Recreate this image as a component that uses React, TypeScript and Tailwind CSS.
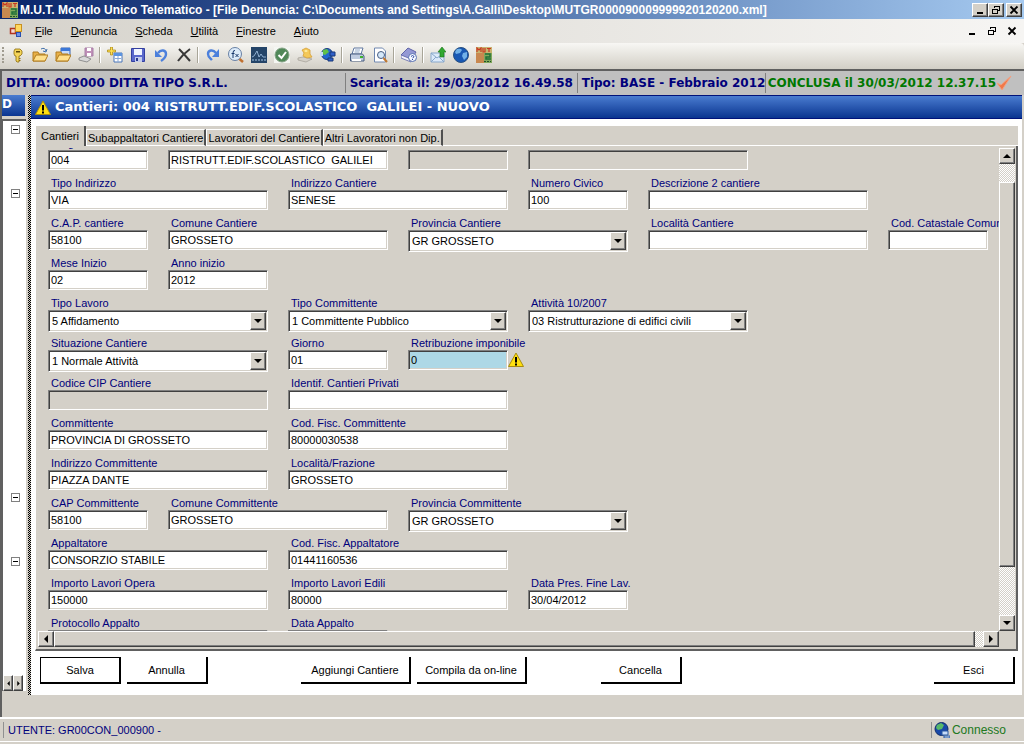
import { type ReactNode, useState } from 'react'
import { clsx } from 'clsx'

interface FieldProps {
  id: string
  label?: string
  value?: string
  col: string
  kind?: 'text' | 'select' | 'disabled' | 'warning'
}

const fields: FieldProps[] = [
  { id: 'progr', label: 'Progr.', value: '004', col: 'col-start-1' },
  { id: 'nome', value: 'RISTRUTT.EDIF.SCOLASTICO  GALILEI', col: 'col-start-2 col-span-2' },
  { id: 'extra1', col: 'col-start-4', kind: 'disabled' },
  { id: 'extra2', col: 'col-start-5 col-span-2', kind: 'disabled' },

  { id: 'tipo-indirizzo', label: 'Tipo Indirizzo', value: 'VIA', col: 'col-start-1 col-span-2' },
  { id: 'indirizzo', label: 'Indirizzo Cantiere', value: 'SENESE', col: 'col-start-3 col-span-2' },
  { id: 'civico', label: 'Numero Civico', value: '100', col: 'col-start-5' },
  { id: 'descrizione2', label: 'Descrizione 2 cantiere', col: 'col-start-6 col-span-2' },

  { id: 'cap', label: 'C.A.P. cantiere', value: '58100', col: 'col-start-1' },
  { id: 'comune', label: 'Comune Cantiere', value: 'GROSSETO', col: 'col-start-2 col-span-2' },
  { id: 'provincia', label: 'Provincia Cantiere', value: 'GR GROSSETO', col: 'col-start-4 col-span-2', kind: 'select' },
  { id: 'localita', label: 'Località Cantiere', col: 'col-start-6 col-span-2' },
  { id: 'catastale', label: 'Cod. Catastale Comune', col: 'col-start-8' },

  { id: 'mese', label: 'Mese Inizio', value: '02', col: 'col-start-1' },
  { id: 'anno', label: 'Anno inizio', value: '2012', col: 'col-start-2' },

  { id: 'tipo-lavoro', label: 'Tipo Lavoro', value: '5 Affidamento', col: 'col-start-1 col-span-2', kind: 'select' },
  { id: 'tipo-committente', label: 'Tipo Committente', value: '1 Committente Pubblico', col: 'col-start-3 col-span-2', kind: 'select' },
  { id: 'attivita', label: 'Attività 10/2007', value: '03 Ristrutturazione di edifici civili', col: 'col-start-5 col-span-2', kind: 'select' },

  { id: 'situazione', label: 'Situazione Cantiere', value: '1 Normale Attività', col: 'col-start-1 col-span-2', kind: 'select' },
  { id: 'giorno', label: 'Giorno', value: '01', col: 'col-start-3' },
  { id: 'retribuzione', label: 'Retribuzione imponibile', value: '0', col: 'col-start-4 col-span-2', kind: 'warning' },

  { id: 'cip', label: 'Codice CIP Cantiere', col: 'col-start-1 col-span-2', kind: 'disabled' },
  { id: 'privati', label: 'Identif. Cantieri Privati', col: 'col-start-3 col-span-2' },

  { id: 'committente', label: 'Committente', value: 'PROVINCIA DI GROSSETO', col: 'col-start-1 col-span-2' },
  { id: 'cf-committente', label: 'Cod. Fisc. Committente', value: '80000030538', col: 'col-start-3 col-span-2' },

  { id: 'ind-committente', label: 'Indirizzo Committente', value: 'PIAZZA DANTE', col: 'col-start-1 col-span-2' },
  { id: 'frazione', label: 'Località/Frazione', value: 'GROSSETO', col: 'col-start-3 col-span-2' },

  { id: 'cap-committente', label: 'CAP Committente', value: '58100', col: 'col-start-1' },
  { id: 'comune-committente', label: 'Comune Committente', value: 'GROSSETO', col: 'col-start-2 col-span-2' },
  { id: 'prov-committente', label: 'Provincia Committente', value: 'GR GROSSETO', col: 'col-start-4 col-span-2', kind: 'select' },

  { id: 'appaltatore', label: 'Appaltatore', value: 'CONSORZIO STABILE', col: 'col-start-1 col-span-2' },
  { id: 'cf-appaltatore', label: 'Cod. Fisc. Appaltatore', value: '01441160536', col: 'col-start-3 col-span-2' },

  { id: 'importo-opera', label: 'Importo Lavori Opera', value: '150000', col: 'col-start-1 col-span-2' },
  { id: 'importo-edili', label: 'Importo Lavori Edili', value: '80000', col: 'col-start-3 col-span-2' },
  { id: 'fine-lavori', label: 'Data Pres. Fine Lav.', value: '30/04/2012', col: 'col-start-5' },

  { id: 'protocollo', label: 'Protocollo Appalto', col: 'col-start-1 col-span-2' },
  { id: 'data-appalto', label: 'Data Appalto', col: 'col-start-3' },
]

const menus = ['File', 'Denuncia', 'Scheda', 'Utilità', 'Finestre', 'Aiuto']
const tabs = ['Cantieri', 'Subappaltatori Cantiere', 'Lavoratori del Cantiere', 'Altri Lavoratori non Dip.']
const treeRows = Array.from({ length: 34 }, (_, i) => i)
const treeNodes = [0, 4, 23, 27]

const raised =
  'border border-t-white border-l-white border-r-[#404040] border-b-[#404040] bg-[#d4d0c8] shadow-[inset_-1px_-1px_0_#808080]'
const sunken =
  'border border-t-[#808080] border-l-[#808080] border-r-white border-b-white shadow-[inset_1px_1px_0_#404040,inset_-1px_-1px_0_#d4d0c8]'
const dither =
  'bg-[conic-gradient(#fff_25%,#d4d0c8_0_50%,#fff_0_75%,#d4d0c8_0)] bg-[length:2px_2px]'

export default function App() {
  return (
    <div className="flex h-screen flex-col overflow-hidden bg-[#d4d0c8] font-['Liberation_Sans',sans-serif] text-[11px] leading-[14px] text-black">
      <TitleBar />
      <MenuBar />
      <Toolbar />
      <div className="flex min-h-0 flex-1 flex-col border-t-2 border-l-2 border-t-[#606060] border-l-[#606060]">
        <CompanyBar />
        <main className="flex min-h-0 flex-1 pr-0.5">
          <TreePane />
          <section className="flex min-w-0 flex-1 flex-col bg-white">
            <h1 className="flex h-6 shrink-0 items-center gap-1 border-y border-[#00127a] bg-linear-to-b from-[#4a7cd0] to-[#0a3490] pl-1 font-['DejaVu_Sans',sans-serif] text-[13px] font-bold whitespace-pre text-white">
              <WarningIcon size={16} />
              Cantieri: 004 RISTRUTT.EDIF.SCOLASTICO  GALILEI - NUOVO
            </h1>
            <TabbedForm />
            <Actions />
          </section>
        </main>
        <div className="h-[22px] shrink-0" />
      </div>
      <StatusBar />
    </div>
  )
}

function TitleBar() {
  return (
    <header className="flex h-[19px] shrink-0 items-center bg-linear-to-r from-[#0a246a] to-[#a6caf0] pr-0.5 pl-0.5 text-white">
      <MutIcon size={16} />
      <span className="flex-1 pl-0.5 text-[12px] font-bold whitespace-nowrap">
        M.U.T. Modulo Unico Telematico - [File Denuncia: C:\Documents and Settings\A.Galli\Desktop\MUTGR000090009999920120200.xml]
      </span>
      <div className="flex">
        <WindowButton label="Riduci a icona" framed><MinimizeGlyph /></WindowButton>
        <WindowButton label="Ripristina" framed><RestoreGlyph /></WindowButton>
        <span className="w-0.5" />
        <WindowButton label="Chiudi" framed><CloseGlyph /></WindowButton>
      </div>
    </header>
  )
}

function WindowButton({ label, framed, children }: { label: string; framed?: boolean; children: ReactNode }) {
  return (
    <button
      type="button"
      aria-label={label}
      className={clsx('flex h-3.5 w-4 items-center justify-center text-black', framed && raised)}
    >
      {children}
    </button>
  )
}

function MenuBar() {
  return (
    <nav className="flex h-6 shrink-0 items-center bg-linear-to-r from-[#d6d3cc] to-[#f6f5f3] pr-1 pl-2">
      <svg width="16" height="16" viewBox="0 0 16 16" className="mr-[11px]">
        <rect x="2.5" y="5.5" width="5" height="5" fill="#f4d8d0" stroke="#b03420" strokeWidth="1.5" />
        <rect x="7.500" y="1.500" width="6" height="7" fill="#ffd860" stroke="#c89020" />
        <rect x="8.500" y="9.500" width="4" height="4" fill="#6c90e8" stroke="#2850b0" />
      </svg>
      <div className="flex gap-[18px]">
        {menus.map(menu => (
          <button key={menu} type="button">
            <span className="underline">{menu[0]}</span>
            {menu.slice(1)}
          </button>
        ))}
      </div>
      <div className="ml-auto flex gap-1">
        <WindowButton label="Riduci finestra"><MinimizeGlyph /></WindowButton>
        <WindowButton label="Ripristina finestra"><RestoreGlyph /></WindowButton>
        <WindowButton label="Chiudi finestra"><CloseGlyph /></WindowButton>
      </div>
    </nav>
  )
}

function MinimizeGlyph() {
  return (
    <svg width="10" height="10" viewBox="0 0 10 10">
      <path d="M2 7h6v2H2z" />
    </svg>
  )
}

function RestoreGlyph() {
  return (
    <svg width="10" height="10" viewBox="0 0 10 10" fill="none" stroke="#000" shapeRendering="crispEdges">
      <path d="M3.500 3V1.500h5v4H7M3 1h6M1 4h6" />
      <path d="M1.500 4.500h5v4h-5z" />
    </svg>
  )
}

function CloseGlyph() {
  return (
    <svg width="10" height="10" viewBox="0 0 10 10" fill="none" stroke="#000" strokeWidth="1.8">
      <path d="M1.500 1.500l7 7M8.500 1.500l-7 7" />
    </svg>
  )
}

function Toolbar() {
  return (
    <div className="flex h-[26px] shrink-0 items-center rounded-r-sm bg-linear-to-b from-[#f8f7f4] to-[#d2cfc6] pb-0.5">
      <div className="ml-0.5 h-4 w-[3px] border-l-2 border-dotted border-[#a09c90]" />
      <ToolButton label="Accesso">
        <path d="M6 2h5l2 2v3l-2 2h-1v6H8l-1-1V9H6L5 7V4z" fill="#f4d458" stroke="#8c6c10" strokeWidth=".8" />
        <path d="M7 4h4v1.500H7z" fill="#5c4808" />
        <path d="M10 11.500h1.500M10 13.500h1.500" stroke="#8c6c10" />
      </ToolButton>
      <ToolButton label="Apri"><Folder /><path d="M9 2q4-2 5 2m1-2l-1 3-3-1" fill="none" stroke="#3c6ca8" /></ToolButton>
      <ToolButton label="Apri denuncia">
        <path d="M6 1h9v9H6z" fill="#c8dcf8" stroke="#3864b0" /><path d="M6 1h9v3H6z" fill="#3c78d8" /><Folder />
      </ToolButton>
      <ToolButton label="Scarica">
        <path d="M7 1h8v8H7z" fill="#c090b8" stroke="#a880a8" /><path d="M9 1h4v3H9zM9 6h4v3H9z" fill="#fff" />
        <path d="M1 11l5-2 7 3-4 3-8-2z" fill="#d8d8d8" stroke="#909090" />
      </ToolButton>
      <Separator />
      <ToolButton label="Nuovo">
        <path d="M7 6h8v9H7z" fill="#fff" stroke="#4874b8" /><path d="M7 6h8v3H7z" fill="#5c94e0" />
        <path d="M8 11.500h6M11 9v6" stroke="#88a8d8" />
        <path d="M3.500 0h2v3h3v2h-3v3h-2V5h-3V3h3z" fill="#ffe050" stroke="#a88410" strokeWidth=".7" />
      </ToolButton>
      <ToolButton label="Salva denuncia">
        <path d="M1.500 1.500h13v13h-13z" fill="#5a68cc" stroke="#3440a0" />
        <path d="M4 2h8v6H4z" fill="#f0f4ff" /><path d="M5 10h7v5H5z" fill="#c4ccec" /><path d="M6 11h2v3H6z" fill="#283890" />
      </ToolButton>
      <ToolButton label="Indietro">
        <path d="M5 6c3-4 8-3 8 1 0 3-2 5-5 7" fill="none" stroke="#4c80dc" strokeWidth="2.400" />
        <path d="M2 3v7h7z" fill="#4c80dc" />
      </ToolButton>
      <ToolButton label="Elimina">
        <path d="M3 2q5 5 11 12M14 2Q7 7 2 14" fill="none" stroke="#383838" strokeWidth="2" />
      </ToolButton>
      <Separator />
      <ToolButton label="Avanti">
        <path d="M11 6C8 2 3 3 3 7c0 3 2 4 4 6" fill="none" stroke="#4c80dc" strokeWidth="2.400" />
        <path d="M14 2v8H7z" fill="#4c80dc" />
      </ToolButton>
      <ToolButton label="Calcola">
        <circle cx="7" cy="7" r="6.500" fill="#dcebfa" stroke="#6880a4" />
        <path d="M11.500 12l3.500 3" stroke="#c07030" strokeWidth="2.500" />
        <path d="M7 3.500Q5 3 5 6v5M3.500 6.500h3M7.500 7l3 3M10.500 7l-3 3" fill="none" stroke="#18386c" />
      </ToolButton>
      <ToolButton label="Statistiche">
        <path d="M0 0h16v16H0z" fill="#244468" /><path d="M1 10l2-1 3-5 2 6 2-3 2 3h3" fill="none" stroke="#a8c8e8" strokeWidth=".8" />
        <path d="M1 13h14" stroke="#a8c8e8" strokeDasharray="2 1" />
      </ToolButton>
      <ToolButton label="Controlla">
        <path d="M0 0h16v16H0z" fill="#f4f6f2" />
        <circle cx="8" cy="8" r="7" fill="#508858" stroke="#88a488" />
        <path d="M4.500 8l3 3 4.500-6" fill="none" stroke="#fff" strokeWidth="2" />
      </ToolButton>
      <ToolButton label="Pagamenti">
        <path d="M1 11l5-1 9 2-6 3-8-2z" fill="#d4d0c8" stroke="#a8a49c" strokeWidth=".8" />
        <path d="M5 3l4-2 4 2v4l2 3-5 1-4-2 1-3z" fill="#f4c858" stroke="#d4a038" strokeWidth=".8" /><path d="M7 4l2-1 2 1-2 1z" fill="#fff4b0" />
      </ToolButton>
      <ToolButton label="Connessione">
        <circle cx="7" cy="7" r="5.500" fill="#2468d0" stroke="#1c3c80" />
        <path d="M3 3l4-1 2 3-4 3-3-1z" fill="#60c048" />
        <path d="M10 5h5v4h-5zM8 11h5v3H8z" fill="#3060c8" stroke="#183878" />
        <path d="M0 5h3v4H0z" fill="#c8dcf8" />
      </ToolButton>
      <Separator />
      <ToolButton label="Stampa">
        <path d="M5 1h9l-2 6H3z" fill="#fff" stroke="#6078a0" />
        <path d="M1.500 7h12l1.500 2v5H1.500z" fill="#c0cce0" stroke="#485c80" /><path d="M3 12h9v2H3z" fill="#fff" />
        <path d="M11 9h3v2h-3z" fill="#40b030" /><path d="M6 3h5M5.500 5h5" stroke="#90a8c8" />
      </ToolButton>
      <ToolButton label="Anteprima">
        <path d="M2.500 1h8l3 3v11h-11z" fill="#fff" stroke="#7088b0" />
        <circle cx="9" cy="8" r="3.500" fill="#d4e8fa" stroke="#485c80" /><path d="M11.500 11l3.500 4" stroke="#c07830" strokeWidth="2" />
      </ToolButton>
      <Separator />
      <ToolButton label="Guida">
        <path d="M0 8l7-7 8 4-5 8z" fill="#9498d4" stroke="#6064a8" /><path d="M0 8l10 4v3L0 11z" fill="#f4f4fc" stroke="#6064a8" strokeWidth=".8" />
        <circle cx="11.500" cy="10.500" r="4" fill="#f4f7ff" stroke="#5870b0" />
        <path d="M10 9.500q1.500-2 3 0 0 1-1.500 1.500M11.500 12v1" fill="none" stroke="#2c48a0" />
      </ToolButton>
      <Separator />
      <ToolButton label="Invia">
        <path d="M1 6h13v9H1z" fill="#dceafa" stroke="#88a8cc" /><path d="M1 6l6 5 7-5M1 15l5-5M14 15l-5-5" fill="none" stroke="#88a8cc" />
        <path d="M12 0l4 5h-2v5h-4V5H8z" fill="#30a830" stroke="#187018" strokeWidth=".6" />
      </ToolButton>
      <ToolButton label="Sito web">
        <circle cx="8" cy="8" r="7.500" fill="#1858b4" stroke="#285080" /><path d="M4 2q4-1 5 1l-2 3-4 1-1-2zM10 6l4-1v5l-3 3-2-4z" fill="#70b0e8" />
      </ToolButton>
      <ToolButton label="MUT"><MutArt /></ToolButton>
    </div>
  )
}

function ToolButton({ label, children }: { label: string; children: ReactNode }) {
  return (
    <button type="button" aria-label={label} className="flex h-6 w-[23px] items-center justify-center">
      <svg width="16" height="16" viewBox="0 0 16 16">{children}</svg>
    </button>
  )
}

function Separator() {
  return <div className="mx-0.5 h-4 w-0.5 border-r border-l border-r-white border-l-[#a8a598]" />
}

function Folder() {
  return (
    <>
      <path d="M1 14V5h5l1 2h6v7z" fill="#e8b048" stroke="#b07c20" />
      <path d="M1 14l3-6h12l-3 6z" fill="#ffe08c" stroke="#b07c20" />
    </>
  )
}

function MutArt() {
  return (
    <>
      <path d="M0 0h16v16H0z" fill="#c8b470" />
      <path d="M0 6h8v10H0z" fill="#c88850" />
      <path d="M8 6h8v10H8z" fill="#80a85c" />
      <path d="M1 5V1l2 2 2-2v4M7 1v4h2V1M11 1.500h4M13 1v4" fill="none" stroke="#c83820" strokeWidth="1.200" />
      <path d="M9 7h5v3h-4v2h5" fill="none" stroke="#207038" strokeWidth="1.500" />
      <path d="M8 14.500h7" stroke="#205028" strokeDasharray="2 1" />
    </>
  )
}

function MutIcon({ size }: { size: number }) {
  return (
    <svg width={size} height={size} viewBox="0 0 16 16" className="shrink-0">
      <MutArt />
    </svg>
  )
}

function CompanyBar() {
  return (
    <div className="flex h-6 shrink-0 items-center bg-[#c0c0c0] pr-3 pl-1 font-['DejaVu_Sans',sans-serif] text-[12px] font-bold whitespace-nowrap text-[#00007b]">
      <span className="flex-1">DITTA: 009000 DITTA TIPO S.R.L.</span>
      <span className="flex h-5 w-[232px] items-center border-l border-[#808080] px-1">Scaricata il: 29/03/2012 16.49.58</span>
      <span className="flex h-5 w-[188px] items-center border-l border-[#808080] pl-1">Tipo: BASE - Febbraio 2012</span>
      <span className="flex h-5 items-center border-l border-[#808080] pl-0.5 text-[#007800]">
        CONCLUSA il 30/03/2012 12.37.15
        <svg width="16" height="16" viewBox="0 0 16 16">
          <path d="M1 8l4 2L15 1 6 15z" fill="#f07848" stroke="#f4a080" />
        </svg>
      </span>
    </div>
  )
}

function TreePane() {
  return (
    <aside className="flex shrink-0">
      <div className="flex w-[26px] flex-col pr-0.5">
        <div className="h-[21px] w-[23px] shrink-0 bg-linear-to-b from-[#4a7cd0] to-[#0a3490] pt-0.5 font-['DejaVu_Sans',sans-serif] text-[12px] font-bold text-white">
          D
        </div>
        <div className="mt-[3px] mb-1 flex min-h-0 flex-1 flex-col border-t-2 border-l border-[#606060] bg-white">
          <ul className="min-h-0 flex-1 overflow-hidden">
            {treeRows.map(row => (
              <li key={row} className="flex h-4 items-center pl-2">
                {treeNodes.includes(row) && (
                  <button
                    type="button"
                    aria-label="Comprimi"
                    className="flex size-[9px] items-center justify-center border border-[#808080]"
                  >
                    <span className="h-px w-[5px] bg-black" />
                  </button>
                )}
              </li>
            ))}
          </ul>
          <div className="flex h-4 shrink-0">
            <ScrollButton label="Sinistra" direction="left" small />
            <ScrollButton label="Destra" direction="right" small />
          </div>
        </div>
      </div>
      <div className="w-[3px] bg-[conic-gradient(#000_25%,#d4d0c8_0_50%,#000_0_75%,#d4d0c8_0)] bg-[length:2px_2px]" />
    </aside>
  )
}

const arrows = {
  up: 'M4 2L0 6h8z',
  down: 'M4 6L0 2h8z',
  left: 'M2 4l4-4v8z',
  right: 'M6 4L2 0v8z',
}

function ScrollButton({ label, direction, small }: { label: string; direction: keyof typeof arrows; small?: boolean }) {
  return (
    <button
      type="button"
      aria-label={label}
      className={clsx('flex h-4 shrink-0 items-center justify-center', small ? 'w-[10px]' : 'w-4', raised)}
    >
      <svg width={small ? 5 : 8} height={small ? 5 : 8} viewBox="0 0 8 8">
        <path d={arrows[direction]} />
      </svg>
    </button>
  )
}

function TabbedForm() {
  const [active, setActive] = useState(0)

  return (
    <div className="mt-[7px] mr-1 ml-1 flex min-h-0 flex-1 flex-col bg-[#d4d0c8]">
      <div role="tablist" className="flex h-5 shrink-0 items-end">
        {tabs.map((tab, index) => (
          <button
            key={tab}
            type="button"
            role="tab"
            aria-selected={index === active}
            onClick={() => setActive(index)}
            className={clsx(
              'border-r-2 border-l border-r-[#505050] border-l-white whitespace-nowrap',
              index === active ? 'h-5 px-[5px]' : 'h-[17px] border-t border-b border-t-white border-b-white px-px',
            )}
          >
            {tab}
          </button>
        ))}
        <div className="flex-1 self-stretch border-b border-white" />
      </div>
      <div className="flex min-h-0 flex-1 flex-col border-r-2 border-b-2 border-l border-r-[#606060] border-b-[#606060] border-l-white pt-0.5 pr-px pb-0.5 pl-0.5">
        <div className="flex min-h-0 flex-1">
          <div className="min-w-0 flex-1 overflow-hidden">
            <form className="-mt-3 ml-2.5 grid auto-rows-[40px] grid-cols-[repeat(8,100px)] gap-x-5">
              {fields.map(field => (
                <Field key={field.id} {...field} />
              ))}
            </form>
          </div>
          <div className={clsx('flex w-4 flex-col', dither)}>
            <ScrollButton label="Su" direction="up" />
            <div className="h-[18px] shrink-0" />
            <div className={clsx('min-h-0 flex-1', raised)} />
            <div className="h-12 shrink-0" />
            <ScrollButton label="Giù" direction="down" />
          </div>
        </div>
        <div className={clsx('mr-4 flex h-4 shrink-0', dither)}>
          <ScrollButton label="Indietro" direction="left" />
          <div className={clsx('min-w-0 flex-1', raised)} />
          <div className="w-2 shrink-0" />
          <ScrollButton label="Avanti" direction="right" />
        </div>
      </div>
    </div>
  )
}

function Field({ id, label, value, col, kind = 'text' }: FieldProps) {
  return (
    <div className={clsx('min-w-0', col)}>
      <label htmlFor={id} className="block h-3.5 pl-[3px] whitespace-nowrap text-[#00007b]">
        {label}
      </label>
      {kind === 'select' ? (
        <div className="relative">
          <select id={id} className={clsx('h-[22px] w-full appearance-none bg-white pr-5 pl-[3px]', sunken)}>
            <option>{value}</option>
          </select>
          <span
            className={clsx(
              'pointer-events-none absolute top-0.5 right-0.5 flex h-[18px] w-4 items-center justify-center',
              raised,
            )}
          >
            <svg width="8" height="8" viewBox="0 0 8 8">
              <path d={arrows.down} />
            </svg>
          </span>
        </div>
      ) : (
        <div className="flex">
          <input
            id={id}
            aria-label={label ? undefined : id}
            defaultValue={value}
            disabled={kind === 'disabled'}
            className={clsx(
              'h-5 px-0.5',
              kind === 'warning' ? 'w-[100px] bg-[#add8e6]' : 'w-full',
              kind === 'disabled' && 'bg-[#d4d0c8]',
              kind === 'text' && 'bg-white',
              sunken,
            )}
          />
          {kind === 'warning' && <WarningIcon size={16} />}
        </div>
      )}
    </div>
  )
}

function WarningIcon({ size }: { size: number }) {
  return (
    <svg width={size} height={size} viewBox="0 0 16 16" className="mt-0.5 shrink-0">
      <path d="M8 1L15.500 14.500H.5z" fill="#ffe010" stroke="#a88c10" strokeLinejoin="round" />
      <path d="M7 5h2v5.500H7zM7 11.500h2v2H7z" fill="#000" />
    </svg>
  )
}

function Actions() {
  return (
    <div className="flex shrink-0 items-start gap-1.5 pt-1.5 pr-[7px] pb-[11px] pl-[9px]">
      <ActionButton className="w-[81px] border-t border-l">Salva</ActionButton>
      <ActionButton className="w-[81px]">Annulla</ActionButton>
      <ActionButton className="ml-[87px] w-[110px]">Aggiungi Cantiere</ActionButton>
      <ActionButton className="w-[110px]">Compila da on-line</ActionButton>
      <ActionButton className="ml-[68px] w-[81px]">Cancella</ActionButton>
      <ActionButton className="ml-auto w-[81px]">Esci</ActionButton>
    </div>
  )
}

function ActionButton({ className, children }: { className: string; children: ReactNode }) {
  return (
    <button type="button" className={clsx('h-[27px] border-r-2 border-b-2 border-black bg-white', className)}>
      {children}
    </button>
  )
}

function StatusBar() {
  return (
    <footer className="flex h-[27px] shrink-0 border-t-2 border-white pb-0.5">
      <div className="flex flex-1 items-center justify-between border-b border-white pr-[18px] pl-[3px]">
        <span className="flex h-4 items-center border-l border-[#909090] pl-1 text-[#00007b]">
          UTENTE: GR00CON_000900 -
        </span>
        <span className="flex h-4 items-center gap-0.5 border-l border-[#909090] pl-0.5 text-[12px] text-[#207820]">
          <svg width="16" height="16" viewBox="0 0 16 16">
            <circle cx="7.500" cy="7" r="6.500" fill="#1848a8" stroke="#102c68" />
            <path d="M3 3l4-2 3 2-2 4-4 1-2-2z" fill="#58b868" />
            <path d="M8 9h6v4H8zM10 14h6v2h-6z" fill="#c8dcf8" stroke="#2858a0" />
          </svg>
          Connesso
        </span>
      </div>
    </footer>
  )
}
